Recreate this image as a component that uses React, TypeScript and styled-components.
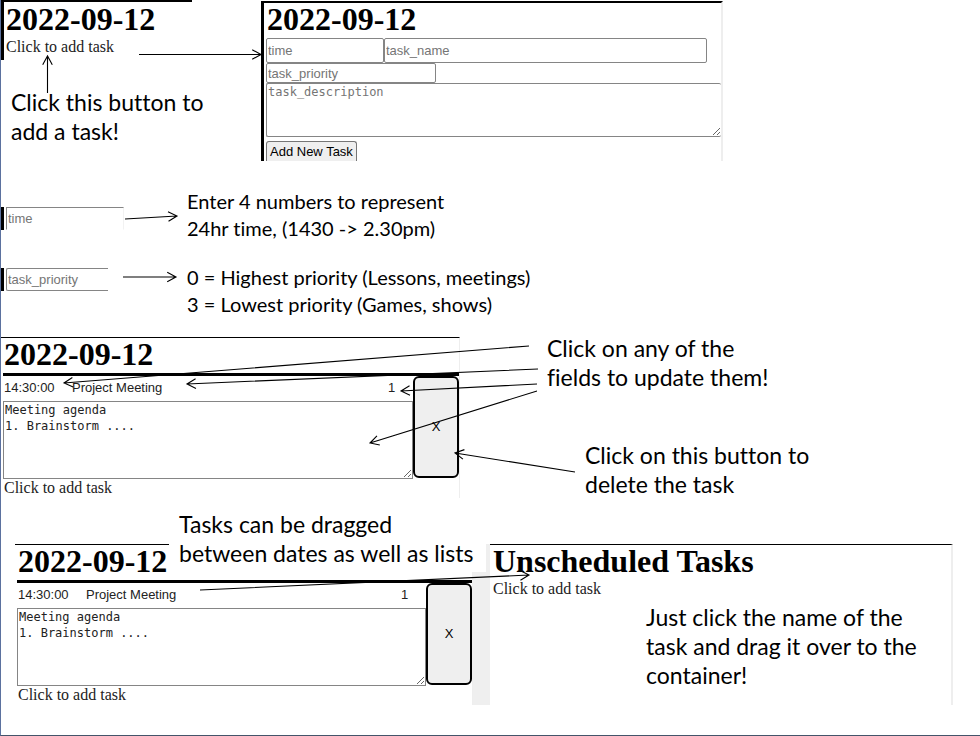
import React from "react";
import styled, { createGlobalStyle, css } from "styled-components";

const GlobalStyle = createGlobalStyle`
  *, *::before, *::after { box-sizing: border-box; }
  body { margin: 0; background: #fff; color: #000; }
`;

const serif = `"Liberation Serif", "Times New Roman", serif`;
const sans = `"Liberation Sans", Arial, sans-serif`;
const mono = `"DejaVu Sans Mono", Consolas, monospace`;
const note = `Lato, Calibri, sans-serif`;

const Slide = styled.main`
  position: relative;
  min-height: 100vh;
  border-left: 1px solid #5b719f;
  border-bottom: 1px solid #44546a;
  font-family: ${note};
`;

const AddSection = styled.section`
  display: grid;
  grid-template-columns: minmax(0, 260fr) minmax(0, 462fr) minmax(0, 257fr);
  align-items: start;
`;

const HintSection = styled.section`
  display: grid;
  grid-template-columns: minmax(0, 186fr) minmax(0, 793fr);
  row-gap: 22px;
  align-items: start;
  margin-top: 27px;
`;

const UpdateSection = styled.section`
  display: grid;
  grid-template-columns: minmax(0, 459fr) minmax(0, 520fr);
  align-items: start;
  margin-top: 16px;
`;

const DragSection = styled.section`
  display: grid;
  grid-template-columns: minmax(0, 458fr) 17px minmax(0, 463fr) minmax(0, 27fr);
  margin-top: 45px;
  padding-left: 14px;
`;

const Caption = styled.p<{ $small?: boolean }>`
  margin: 0;
  font-size: ${(p) => (p.$small ? 20 : 23)}px;
  line-height: ${(p) => (p.$small ? 27 : 29)}px;
  font-variant-ligatures: none;
  white-space: nowrap;
`;

const AddColumn = styled.div`
  display: flex;
  flex-direction: column;
  gap: 28px;
  ${Caption} { padding-left: 10px; }
`;

const DateCard = styled.article`
  margin-right: 69px;
  padding: 1px 0 4px 1px;
  border-top: 2px solid #000;
  border-left: 3px solid #000;
`;

const FormCard = styled.article`
  margin-top: 1px;
  padding-left: 2px;
  border-top: 2px solid #000;
  border-left: 3px solid #000;
  border-right: 2px solid #eee;
`;

const ListCard = styled.article`
  position: relative;
  padding: 0 0 1px 2px;
  border-top: 1px solid #000;
  border-right: 1px solid #eee;
`;

const Title = styled.h1`
  margin: 0 0 3px;
  padding-left: 1px;
  font: bold 32px/32px ${serif};
  white-space: nowrap;
`;

const AddLink = styled.button`
  display: block;
  padding: 0 1px;
  border: 0;
  background: none;
  color: #222;
  font: 16px/18px ${serif};
  cursor: pointer;
`;

const field = css`
  min-width: 0;
  margin: 0;
  border: 1px solid #858585;
  border-radius: 2px;
  background: #fff;
  color: #222;
  font: 13px/16px ${sans};
  outline: 0;
  &::placeholder { color: #757575; opacity: 1; }
`;

const FormRow = styled.div`
  display: grid;
  grid-template-columns: minmax(0, 118fr) minmax(0, 323fr) 14px;
`;

const PriorityRow = styled.div`
  display: grid;
  grid-template-columns: minmax(0, 170fr) minmax(0, 285fr);
`;

const FormInput = styled.input<{ $tall?: boolean }>`
  ${field}
  height: ${(p) => (p.$tall ? 25 : 20)}px;
  padding: 1px;
`;

const Description = styled.textarea<{ $form?: boolean }>`
  ${field}
  display: block;
  width: 100%;
  height: ${(p) => (p.$form ? 54 : 78)}px;
  padding: 0 1px;
  border-right-width: ${(p) => (p.$form ? 0 : 1)}px;
  border-radius: ${(p) => (p.$form ? 2 : 0)}px;
  font: 12px/16px ${mono};
  resize: both;
`;

const Submit = styled.button`
  display: block;
  height: 20px;
  margin-top: 4px;
  padding: 0 3px;
  border: 1px solid #767676;
  border-bottom: 0;
  border-radius: 3px 3px 0 0;
  background: #efefef;
  color: #000;
  font: 13px/18px ${sans};
`;

const Sample = styled.div`
  display: flex;
  padding-left: 2px;
  border-left: 3px solid #000;
  height: 23px;
`;

const TimeSample = styled(FormInput)`
  width: 118px;
  height: 23px;
  border-color: #858585 #f2f2f2 transparent #858585;
  border-radius: 0;
`;

const PrioritySample = styled(FormInput)`
  width: 102px;
  height: 23px;
  border-right: 0;
  border-radius: 2px 0 0 2px;
`;

const HintCell = styled.div<{ $top: number }>`
  padding-top: ${(p) => p.$top}px;
`;

const Task = styled.div`
  display: grid;
  grid-template-columns: minmax(0, 1fr) 46px;
  align-items: start;
  border-top: 3px solid #000;
`;

const TaskFields = styled.div`
  display: grid;
  grid-template-columns: 68px minmax(0, 1fr) 26px;
  height: 25px;
`;

const TaskField = styled.input`
  ${field}
  width: 100%;
  height: 22px;
  padding: 0 1px;
  border: 0;
`;

const DeleteButton = styled.button`
  height: 102px;
  border: 2px solid #000;
  border-radius: 6px;
  background: #efefef;
  color: #000;
  font: 13px/16px ${sans};
`;

const UpdateNotes = styled.div`
  display: flex;
  flex-direction: column;
  gap: 49px;
  padding-left: 87px;
  ${Caption} + ${Caption} { padding-left: 38px; }
`;

const UpdateCard = styled(ListCard)`
  margin-top: 3px;
`;

const Gutter = styled.div`
  background: #efefef;
`;

const DragNote = styled(Caption)`
  position: absolute;
  top: -35px;
  left: 154px;
  padding: 0 13px 4px 10px;
  background: #fff;
`;

const Unscheduled = styled(ListCard)`
  border-right-width: 2px;
  min-height: 161px;
  ${Caption} {
    padding: 5px 0 0 154px;
  }
`;

const ArrowLayer = styled.svg`
  position: absolute;
  inset: 0;
  width: 100%;
  height: 100%;
  pointer-events: none;
  fill: none;
  stroke: #000;
  stroke-width: 1.1;
`;

const arrows = [
  [47.5, 93, 47.5, 56],
  [139, 54.5, 261, 54.5],
  [125, 219, 177, 216],
  [123, 277, 176, 277],
  [529, 346, 64, 383],
  [538, 369, 187, 384],
  [537, 384, 401, 391],
  [537, 391, 370, 443],
  [575, 472, 455, 453],
  [200, 590, 529, 575],
];

function arrowPath([x1, y1, x2, y2]: number[]) {
  const angle = Math.atan2(y2 - y1, x2 - x1);
  const tip = (turn: number) =>
    `${x2 - 10 * Math.cos(angle + turn)} ${y2 - 10 * Math.sin(angle + turn)}`;
  return `M${x1} ${y1}L${x2} ${y2}M${tip(0.5)}L${x2} ${y2}L${tip(-0.5)}`;
}

function TaskEntry() {
  return (
    <Task>
      <div>
        <TaskFields>
          <TaskField aria-label="time" defaultValue="14:30:00" />
          <TaskField aria-label="task name" defaultValue="Project Meeting" />
          <TaskField aria-label="task priority" defaultValue="1" />
        </TaskFields>
        <Description
          aria-label="task description"
          defaultValue={"Meeting agenda\n1. Brainstorm ...."}
        />
      </div>
      <DeleteButton aria-label="Delete task">X</DeleteButton>
    </Task>
  );
}

export default function App() {
  return (
    <>
      <GlobalStyle />
      <Slide>
        <AddSection>
          <AddColumn>
            <DateCard>
              <Title>2022-09-12</Title>
              <AddLink>Click to add task</AddLink>
            </DateCard>
            <Caption>
              Click this button to
              <br />
              add a task!
            </Caption>
          </AddColumn>
          <FormCard>
            <Title>2022-09-12</Title>
            <form onSubmit={(e) => e.preventDefault()}>
              <FormRow>
                <FormInput $tall aria-label="time" placeholder="time" />
                <FormInput $tall aria-label="task name" placeholder="task_name" />
              </FormRow>
              <PriorityRow>
                <FormInput aria-label="task priority" placeholder="task_priority" />
              </PriorityRow>
              <Description $form aria-label="task description" placeholder="task_description" />
              <Submit>Add New Task</Submit>
            </form>
          </FormCard>
        </AddSection>

        <HintSection>
          <HintCell $top={19}>
            <Sample>
              <TimeSample aria-label="time" placeholder="time" />
            </Sample>
          </HintCell>
          <Caption $small>
            Enter 4 numbers to represent
            <br />
            24hr time, (1430 -&gt; 2.30pm)
          </Caption>
          <HintCell $top={4}>
            <Sample>
              <PrioritySample aria-label="task priority" placeholder="task_priority" />
            </Sample>
          </HintCell>
          <Caption $small>
            0 = Highest priority (Lessons, meetings)
            <br />3 = Lowest priority (Games, shows)
          </Caption>
        </HintSection>

        <UpdateSection>
          <UpdateCard>
            <Title>2022-09-12</Title>
            <TaskEntry />
            <AddLink>Click to add task</AddLink>
          </UpdateCard>
          <UpdateNotes>
            <Caption>
              Click on any of the
              <br />
              fields to update them!
            </Caption>
            <Caption>
              Click on this button to
              <br />
              delete the task
            </Caption>
          </UpdateNotes>
        </UpdateSection>

        <DragSection>
          <ListCard>
            <Title>2022-09-12</Title>
            <TaskEntry />
            <AddLink>Click to add task</AddLink>
            <DragNote>
              Tasks can be dragged
              <br />
              between dates as well as lists
            </DragNote>
          </ListCard>
          <Gutter />
          <Unscheduled>
            <Title>Unscheduled Tasks</Title>
            <AddLink>Click to add task</AddLink>
            <Caption>
              Just click the name of the
              <br />
              task and drag it over to the
              <br />
              container!
            </Caption>
          </Unscheduled>
        </DragSection>

        <ArrowLayer viewBox="1 0 979 735" preserveAspectRatio="none" aria-hidden="true">
          {arrows.map((a, i) => (
            <path key={i} d={arrowPath(a)} />
          ))}
        </ArrowLayer>
      </Slide>
    </>
  );
}
